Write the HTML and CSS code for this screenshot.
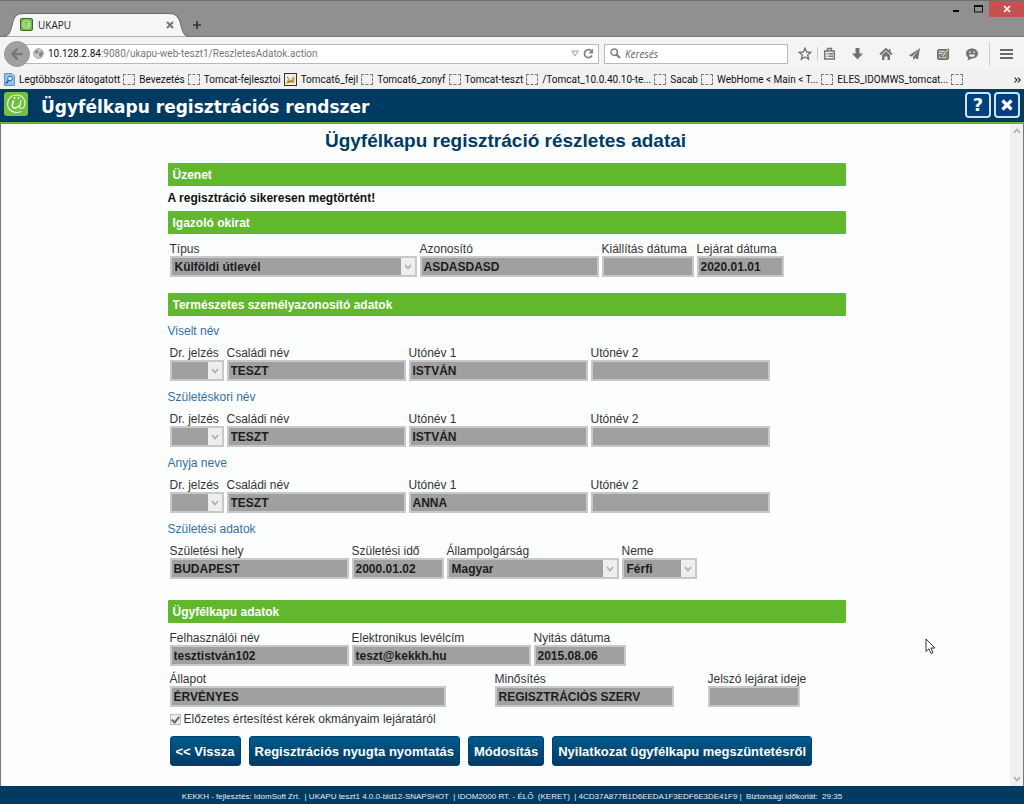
FILE: index.html
```html
<!DOCTYPE html>
<html lang="hu">
<head>
<meta charset="utf-8">
<title>UKAPU</title>
<link rel="stylesheet" href="styles.css">
</head>
<body>
<div class="window">
  <div class="titlebar">
    <div class="tab">
      <svg class="tab-shape" viewBox="0 0 192 23" preserveAspectRatio="none" aria-hidden="true"><path d="M0 23 C8 23 10 20 12 12 C14 3 16 .5 24 .5 H168 C176 .5 179 3 181 12 C183 20 185 23 192 23Z" fill="#f6f6f6" stroke="#6c6c6c"/></svg>
      <svg class="tab-icon" viewBox="0 0 24 24" aria-hidden="true"><rect x="1" y="1" width="22" height="22" rx="3" fill="#77c34a" stroke="#39672a" stroke-width="2"/><circle cx="12" cy="12" r="7" fill="none" stroke="#d5f0bd" stroke-width="1.5"/><path d="M9 9v4q0 2 3 2t3-2V9v6h3" fill="none" stroke="#d5f0bd" stroke-width="1.5"/></svg>
      <span class="tab-title">UKAPU</span>
      <button class="plain tab-close" aria-label="Lap bezárása"><svg width="8" height="8" viewBox="0 0 8 8"><path d="M1 1l6 6M7 1L1 7" stroke="#777" stroke-width="2"/></svg></button>
    </div>
    <button class="plain tab-new" aria-label="Új lap"><svg width="10" height="10" viewBox="0 0 10 10"><path d="M5 1v8M1 5h8" stroke="#333" stroke-width="1.6"/></svg></button>
    <div class="win-buttons">
      <button class="plain" aria-label="Kis méret"><svg width="8" height="8" viewBox="0 0 8 8"><path d="M1 6h6" stroke="#000" stroke-width="2"/></svg></button>
      <button class="plain win-max" aria-label="Teljes méret"><svg width="9" height="8" viewBox="0 0 9 8"><path d="M.5 1h8v6h-8z" fill="none" stroke="#111"/><path d="M0 1h9" stroke="#111" stroke-width="2"/></svg></button>
      <button class="plain win-close" aria-label="Bezárás"><svg width="8" height="8" viewBox="0 0 8 8"><path d="M1 1l6 6M7 1L1 7" stroke="#fff" stroke-width="1.7"/></svg></button>
    </div>
  </div>

  <div class="navbar">
    <button class="plain back" aria-label="Vissza"><svg width="14" height="14" viewBox="0 0 14 14"><path d="M7.500 1.500L2.500 7l5 5.500M3 7h9.500" fill="none" stroke="#777" stroke-width="2.600"/></svg></button>
    <div class="urlbar">
      <svg width="11" height="11" viewBox="0 0 11 11" aria-hidden="true"><circle cx="5.500" cy="5.500" r="4.800" fill="#c9c9c9" stroke="#9b9b9b"/><path d="M2 3l3-1 1 2-2 2-2-1zM6 5l3-2 1 3-2 3-2-1z" fill="#8b8b8b"/></svg>
      <span class="url"><span class="host">10.128.2.84</span>:9080/ukapu-web-teszt1/ReszletesAdatok.action</span>
      <svg width="8" height="7" viewBox="0 0 8 7" aria-hidden="true"><path d="M.7 1h6.600L4 6z" fill="#eee" stroke="#aaa"/></svg>
      <button class="plain" aria-label="Frissítés"><svg width="11" height="11" viewBox="0 0 11 11"><path d="M9 7.500A4 4 0 1 1 8.500 3" fill="none" stroke="#808080" stroke-width="1.700"/><path d="M10 .500v5H5.500z" fill="#808080"/></svg></button>
    </div>
    <div class="search">
      <svg width="11" height="11" viewBox="0 0 11 11" aria-hidden="true"><circle cx="4.200" cy="4.200" r="3.200" fill="none" stroke="#808080" stroke-width="1.500"/><path d="M6.500 6.500L10 10" stroke="#808080" stroke-width="2.200"/></svg>
      <input type="text" placeholder="Keresés" aria-label="Keresés">
    </div>
    <div class="tools">
      <button class="plain" aria-label="Könyvjelző"><svg width="14" height="14" viewBox="0 0 14 14"><path d="M7 1.300l1.700 3.700 4 .400-3 2.700.900 4L7 10l-3.600 2.100.900-4-3-2.700 4-.400z" fill="none" stroke="#737373" stroke-width="1.400"/></svg></button>
      <span class="split"></span>
      <button class="plain" aria-label="Könyvjelzők listája"><svg width="13" height="14" viewBox="0 0 13 14"><path d="M1.700 4h9.600v8H1.700z" fill="none" stroke="#737373" stroke-width="1.500"/><path d="M4.500 4V1.500h4V4M3.500 6.800h1M5.500 6.800h4.500M3.500 9.300h1M5.500 9.300h4.500" fill="none" stroke="#737373" stroke-width="1.400"/></svg></button>
      <button class="plain" aria-label="Letöltések"><svg width="13" height="14" viewBox="0 0 13 14"><path d="M4.500 1h4v5.500H12L6.500 12.500 1 6.500h3.500z" fill="#737373"/></svg></button>
      <button class="plain" aria-label="Kezdőlap"><svg width="14" height="14" viewBox="0 0 14 14"><path d="M1 7.500L7 2l6 5.500" fill="none" stroke="#737373" stroke-width="1.900"/><path d="M3 8l4-3.700L11 8v5H8.500V9.500h-3V13H3zM10 2h1.500v3L10 4z" fill="#737373"/></svg></button>
      <button class="plain" aria-label="Küldés"><svg width="13" height="14" viewBox="0 0 13 14"><path d="M12 1L1 8.500l3 1.200zM12 1L5 10v3l2-2 3 1.500z" fill="#737373"/></svg></button>
      <button class="plain" aria-label="Jegyzet"><svg width="14" height="14" viewBox="0 0 14 14"><rect x="1.500" y="2.500" width="11" height="10" rx="1.500" fill="#8a8a8a" stroke="#6a6a6a"/><path d="M3 4.500h6M3 6.500h4M3 10.500h7" stroke="#d0d0d0"/><path d="M5 10.500L6 8l6-6.500 1.300 1.200L7.500 9.500z" fill="#e5c79c" stroke="#5d5346" stroke-width=".6"/></svg></button>
      <button class="plain" aria-label="Csevegés"><svg width="14" height="14" viewBox="0 0 14 14"><path d="M7 1.500c3.600 0 6 2.200 6 5s-2.400 5-6 5l-4.500 2 .700-3C1.800 9.700 1 8.200 1 6.500c0-2.800 2.400-5 6-5z" fill="#737373"/><path d="M4 5.500q1-1.500 2 0M8 5.500q1-1.500 2 0" stroke="#eee" fill="none"/><path d="M3.800 7.500h6.400Q9.500 10 7 10T3.800 7.500z" fill="#eee"/></svg></button>
      <span class="split tall"></span>
      <button class="plain" aria-label="Menü"><svg width="13" height="12" viewBox="0 0 13 12"><path d="M0 2h13M0 6h13M0 10h13" stroke="#696969" stroke-width="2"/></svg></button>
    </div>
  </div>

  <nav class="bookmarks" aria-label="Könyvjelzők">
    <a href="#"><svg width="11" height="13" viewBox="0 0 11 13" aria-hidden="true"><path d="M.500.500H8L10.500 3v9.500H.500z" fill="#9ac4e6" stroke="#5a96c8"/><circle cx="6" cy="5.500" r="2.300" fill="#e8f4ff" stroke="#22659e"/><path d="M4.500 7.500L2 10.500" stroke="#22659e" stroke-width="1.800"/></svg>Legtöbbször látogatott</a>
    <a href="#"><i></i>Bevezetés</a>
    <a href="#"><i></i>Tomcat-fejlesztoi</a>
    <a href="#"><svg width="13" height="13" viewBox="0 0 13 13" aria-hidden="true"><rect x=".500" y=".500" width="12" height="12" fill="#f3eee0" stroke="#333"/><path d="M2 10l2-4 2 1 2-1 1-3 2 2-1 5H8L6 9l-2 2z" fill="#c9ac62"/><path d="M3 4l2 2M4 9l5-1" stroke="#7c6632"/></svg>Tomcat6_fejl</a>
    <a href="#"><i></i>Tomcat6_zonyf</a>
    <a href="#"><i></i>Tomcat-teszt</a>
    <a href="#"><i></i>/Tomcat_10.0.40.10-te...</a>
    <a href="#"><i></i>Sacab</a>
    <a href="#"><i></i>WebHome &lt; Main &lt; T...</a>
    <a href="#"><i></i>ELES_IDOMWS_tomcat...</a>
    <a href="#" aria-label="Névtelen könyvjelző"><i></i></a>
    <button class="plain more" aria-label="További könyvjelzők"><svg width="7" height="6" viewBox="0 0 7 6"><path d="M.700.700L3 3 .700 5.300M3.900.700L6.200 3 3.900 5.300" fill="none" stroke="#222" stroke-width="1.100"/></svg></button>
  </nav>

  <header class="app-header">
    <svg class="logo" width="24" height="24" viewBox="0 0 24 24" aria-hidden="true"><rect width="24" height="24" rx="3" fill="#75c044"/><path d="M17.500 19.500C10 22.500 3.500 18 3.500 12 3.500 6.500 7.500 3 12.500 3c5 0 8.500 3.500 8.500 8 0 3.500-1.800 5.500-3.500 5.500-1.600 0-2-1.200-1.700-2.500L17 8" fill="none" stroke="#e4f5d8" stroke-width="1.200"/><path d="M9.300 8.500L8.300 13.500c-.300 3 4.200 3.500 7.200 0M10.500 5v1.800M14.500 5v1.800" fill="none" stroke="#fff" stroke-width="1.500"/></svg>
    <div class="app-name">Ügyfélkapu regisztrációs rendszer</div>
    <div class="head-btns">
      <button class="head-btn" aria-label="Súgó">?</button>
      <button class="head-btn" aria-label="Kilépés"><svg width="12" height="12" viewBox="0 0 12 12"><path d="M1.500 1.500l9 9M10.500 1.500l-9 9" stroke="#fff" stroke-width="3.200"/></svg></button>
    </div>
  </header>

  <div class="viewport">
    <main class="content">
      <form class="sheet">
        <h1>Ügyfélkapu regisztráció részletes adatai</h1>
        <h2>Üzenet</h2>
        <p class="message">A regisztráció sikeresen megtörtént!</p>
        <h2>Igazoló okirat</h2>
        <div class="row">
          <label class="field w-type">Típus<span class="pick"><select disabled><option>Külföldi útlevél</option></select><svg viewBox="0 0 14 17"><path d="M4 7l3 3.500L10 7" /></svg></span></label>
          <label class="field w-text">Azonosító<input type="text" disabled value="ASDASDASD"></label>
          <label class="field w-date">Kiállítás dátuma<input type="text" disabled></label>
          <label class="field w-expiry">Lejárat dátuma<input type="text" disabled value="2020.01.01"></label>
        </div>

        <h2 class="spaced">Természetes személyazonosító adatok</h2>
        <h3>Viselt név</h3>
        <div class="row">
          <label class="field w-title">Dr. jelzés<span class="pick"><select disabled><option></option></select><svg viewBox="0 0 14 17"><path d="M4 7l3 3.500L10 7" /></svg></span></label>
          <label class="field w-text">Családi név<input type="text" disabled value="TESZT"></label>
          <label class="field w-text">Utónév 1<input type="text" disabled value="ISTVÁN"></label>
          <label class="field w-text">Utónév 2<input type="text" disabled></label>
        </div>
        <h3>Születéskori név</h3>
        <div class="row">
          <label class="field w-title">Dr. jelzés<span class="pick"><select disabled><option></option></select><svg viewBox="0 0 14 17"><path d="M4 7l3 3.500L10 7" /></svg></span></label>
          <label class="field w-text">Családi név<input type="text" disabled value="TESZT"></label>
          <label class="field w-text">Utónév 1<input type="text" disabled value="ISTVÁN"></label>
          <label class="field w-text">Utónév 2<input type="text" disabled></label>
        </div>
        <h3>Anyja neve</h3>
        <div class="row">
          <label class="field w-title">Dr. jelzés<span class="pick"><select disabled><option></option></select><svg viewBox="0 0 14 17"><path d="M4 7l3 3.500L10 7" /></svg></span></label>
          <label class="field w-text">Családi név<input type="text" disabled value="TESZT"></label>
          <label class="field w-text">Utónév 1<input type="text" disabled value="ANNA"></label>
          <label class="field w-text">Utónév 2<input type="text" disabled></label>
        </div>
        <h3>Születési adatok</h3>
        <div class="row">
          <label class="field w-text">Születési hely<input type="text" disabled value="BUDAPEST"></label>
          <label class="field w-date">Születési idő<input type="text" disabled value="2000.01.02"></label>
          <label class="field w-nation">Állampolgárság<span class="pick"><select disabled><option>Magyar</option></select><svg viewBox="0 0 14 17"><path d="M4 7l3 3.500L10 7" /></svg></span></label>
          <label class="field w-sex">Neme<span class="pick"><select disabled><option>Férfi</option></select><svg viewBox="0 0 14 17"><path d="M4 7l3 3.500L10 7" /></svg></span></label>
        </div>

        <h2 class="spaced-wide">Ügyfélkapu adatok</h2>
        <div class="row">
          <label class="field w-text">Felhasználói név<input type="text" disabled value="tesztistván102"></label>
          <label class="field w-text">Elektronikus levélcím<input type="text" disabled value="teszt@kekkh.hu"></label>
          <label class="field w-date">Nyitás dátuma<input type="text" disabled value="2015.08.06"></label>
        </div>
        <div class="row status">
          <label class="field w-status">Állapot<input type="text" disabled value="ÉRVÉNYES"></label>
          <label class="field w-text">Minősítés<input type="text" disabled value="REGISZTRÁCIÓS SZERV"></label>
          <label class="field w-date">Jelszó lejárat ideje<input type="text" disabled></label>
        </div>
        <label class="notify"><input type="checkbox" checked disabled>Előzetes értesítést kérek okmányaim lejáratáról</label>
        <div class="actions">
          <button type="button">&lt;&lt; Vissza</button>
          <button type="button">Regisztrációs nyugta nyomtatás</button>
          <button type="button">Módosítás</button>
          <button type="button">Nyilatkozat ügyfélkapu megszüntetésről</button>
        </div>
      </form>
      <svg class="cursor" width="11" height="17" viewBox="0 0 11 17" aria-hidden="true"><path d="M1 1v12.500l3-2.700 2 4.700 2-.900-2-4.600h4z" fill="#fff" stroke="#333"/></svg>
    </main>
    <div class="scrollbar" aria-hidden="true">
      <svg width="8" height="6" viewBox="0 0 8 6"><path d="M1 5l3-3.500L7 5" /></svg>
      <svg width="8" height="6" viewBox="0 0 8 6"><path d="M1 1l3 3.500L7 1" /></svg>
    </div>
  </div>

  <footer class="footer">KEKKH - fejlesztés: IdomSoft Zrt. &nbsp;| UKAPU teszt1 4.0.0-bld12-SNAPSHOT &nbsp;| IDOM2000 RT. - ÉLŐ &nbsp;(KERET) &nbsp;| 4CD37A877B1D6EEDA1F3EDF6E3DE41F9 | &nbsp;Biztonsági időkorlát: &nbsp;29:35</footer>
</div>
</body>
</html>
```
FILE: styles.css
```css
* { box-sizing: border-box; }
body { margin: 0; font-family: "Liberation Sans", Arial, sans-serif; font-size: 12px; color: #333; }
svg { display: block; flex: none; }
.window { min-height: 100vh; display: flex; flex-direction: column; background: #f1f1f1; }
.plain { border: 0; padding: 0; margin: 0; background: none; display: grid; place-items: center; flex: none; }

.titlebar { height: 37px; display: flex; align-items: flex-end; background: #909090; border-top: 1px solid #707070; border-bottom: 1px solid #777; font-family: "Open Sans", sans-serif; }
.tab { position: relative; width: 192px; height: 23px; display: flex; align-items: center; padding: 0 18px 0 20px; gap: 5px; color: #222; font-size: 10px; }
.tab > * { position: relative; }
.tab .tab-shape { position: absolute; left: 0; top: 0; width: 100%; height: 24px; }
.tab-icon { width: 13px; height: 13px; }
.tab-title { flex: 1; }
.tab-new { width: 10px; height: 23px; }
.win-buttons { margin-left: auto; align-self: flex-start; display: flex; gap: 14px; align-items: center; height: 16px; }
.win-max { margin-right: -8px; }
.win-close { width: 35px; height: 16px; background: #c75050; }

.navbar { height: 33px; display: flex; align-items: center; padding: 0 11px 0 4px; background: #f4f4f4; font-family: Roboto, sans-serif; font-size: 10px; }
.back { width: 26px; height: 26px; border-radius: 50%; background: #a0a0a0; border: 1px solid #999; z-index: 1; }
.urlbar, .search { height: 20px; display: flex; align-items: center; background: #fff; border: 1px solid #b9b9b9; }
.urlbar { flex: 1; gap: 4px; padding: 0 4px 0 8px; margin-left: -5px; border-left: 0; }
.url { flex: 1; color: #777; white-space: nowrap; overflow: hidden; }
.host { color: #111; }
.search { width: 184px; margin-left: 5px; padding: 0 5px; gap: 4px; }
.search input { flex: 1; min-width: 0; border: 0; padding: 0; outline: 0; background: none; font: italic 10px "Open Sans", sans-serif; }
.search input::placeholder { color: #666; opacity: 1; }
.tools { display: flex; align-items: center; gap: 15px; padding-left: 10px; }
.split { width: 1px; height: 13px; margin: 0 -10px; background: #ccc; }
.split.tall { height: 24px; margin: 0 -5px; }

.bookmarks { height: 19px; display: flex; align-items: center; gap: 3px; padding: 0 3px 0 4px; font-family: Roboto, sans-serif; font-size: 10px; white-space: nowrap; }
.bookmarks a { display: flex; align-items: center; gap: 4px; color: #111; text-decoration: none; }
.bookmarks i { width: 12px; height: 11px; border: 1px dashed #777; border-radius: 1px; }
.more { margin-left: auto; }

.app-header { display: flex; align-items: center; height: 35px; padding: 0 4px 2px; gap: 5px; background: #003b64; border-bottom: 2px solid #5fb92c; color: #fff; }
.logo { margin-bottom: 2px; }
.app-name { flex: 1; padding: 4px 0 0 8px; font: bold 17px "DejaVu Sans", sans-serif; }
.head-btns { display: flex; gap: 3px; }
.head-btn { width: 26px; height: 26px; padding: 0; display: grid; place-items: center; border: 2px solid #cfe0f0; border-radius: 4px; background: #00407c; color: #fff; font: bold 18px "DejaVu Sans", sans-serif; line-height: 20px; }

.viewport { flex: 1; display: flex; border: 1px solid #777; border-width: 0 1px; background: #fcfefd; }
.content { flex: 1; position: relative; padding: 8px 0 19px 2px; }
.scrollbar { width: 13px; background: #f0f0f0; display: flex; flex-direction: column; justify-content: space-between; align-items: center; padding: 4px 0; }
.scrollbar path { fill: none; stroke: #aaa; stroke-width: 1.5; }
.sheet { max-width: 678px; margin: 0 auto; }
h1 { margin: 0 0 13px; padding-right: 2px; font-size: 19px; line-height: 18px; text-align: center; color: #003b64; }
h2 { margin: 0; padding: 0 5px; height: 23px; font-size: 12px; line-height: 24px; color: #fff; background: #62b82d; border-radius: 1px; }
h2.spaced { margin-top: 16px; }
h2.spaced-wide { margin-top: 21px; }
h3 { margin: 9px 0 0; font-size: 12px; line-height: 14px; font-weight: normal; color: #336ea5; }
h2 + h3 { margin-top: 8px; }
.message { margin: 0; line-height: 25px; font-weight: bold; color: #111; }
.row { display: flex; gap: 3px; padding: 8px 0 0 2px; }
.field { display: flex; flex-direction: column; line-height: 14px; white-space: nowrap; }
.field input, .pick select { width: 100%; height: 21px; margin: 0; border: 2px solid #c8c8c8; border-radius: 0; background: #a0a0a0; color: #1d1d1d; opacity: 1; font: bold 12px "Liberation Sans", Arial, sans-serif; }
.field input { padding: 0 2px; }
.pick { position: relative; display: block; }
.pick select { display: block; appearance: none; padding: 0 16px 0 3px; }
.pick svg { position: absolute; right: 2px; top: 2px; width: 14px; height: 17px; background: #eee; }
.pick path { fill: none; stroke: #aaa; stroke-width: 1.5; }
.w-type { width: 247px; }
.w-text { width: 179px; }
.w-date { width: 92px; }
.w-expiry { width: 87px; }
.w-title { width: 54px; }
.w-nation { width: 172px; }
.w-sex { width: 75px; }
.w-status { width: 276px; margin-right: 46px; }
.status { padding-top: 6px; }
.status .w-text { margin-right: 31px; }
.notify { display: flex; align-items: center; gap: 3px; width: max-content; margin: 4px 0 0 2px; line-height: 16px; }
.notify input { appearance: none; width: 11px; height: 11px; margin: 0; border: 1px solid #bbb; background: #eee; display: grid; place-items: center; }
.notify input::after { content: ""; width: 3px; height: 6px; border: solid #666; border-width: 0 2px 2px 0; rotate: 40deg; margin-bottom: 2px; }
.actions { display: flex; gap: 8px; padding: 9px 0 0 2px; }
.actions button { height: 30px; padding: 0 5px; border: 1px solid #00436d; border-radius: 3px; background: linear-gradient(#005a8b, #003b64); color: #fff; font: bold 13px "Liberation Sans", Arial, sans-serif; white-space: nowrap; }
.cursor { position: absolute; left: 924px; top: 514px; }

.footer { height: 18px; padding-top: 3px; background: #003b64; color: #e4edf4; font-size: 8px; line-height: 16px; text-align: center; white-space: nowrap; }
```
